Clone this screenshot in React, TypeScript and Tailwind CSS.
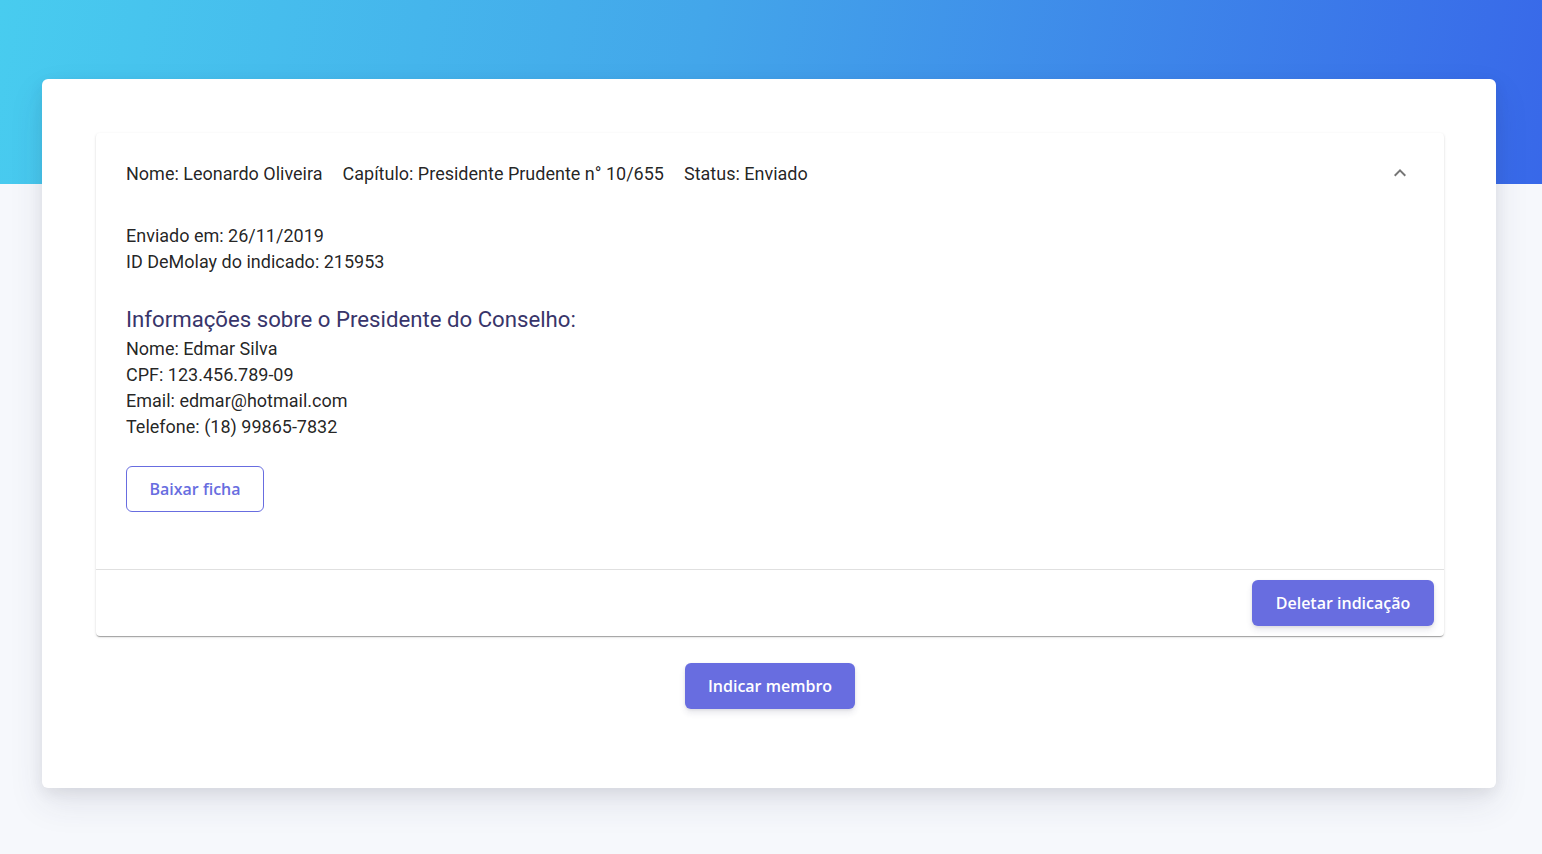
import React from "react";

const body = "font-['Roboto','Liberation_Sans',sans-serif]";
const btnFont = "font-['Open_Sans','Noto_Sans',sans-serif]";

export default function App() {
  return (
    <div className="min-h-[854px] bg-[#f6f8fc] pb-[66px]">
      <div className="h-[184px] bg-[linear-gradient(100deg,#48ccef_0%,#43a6ea_45%,#3868e9_100%)]" />
      <div className="ml-[42px] -mt-[105px] h-[709px] w-[1454px] rounded-[6px] bg-white pl-[54px] pr-[52px] pt-[54px] shadow-[0_15px_35px_rgba(50,50,93,0.1),0_5px_15px_rgba(0,0,0,0.07)]">
        <div className={`rounded-[4px] bg-white shadow-[0px_2px_1px_-1px_rgba(0,0,0,0.2),0px_1px_1px_0px_rgba(0,0,0,0.14),0px_1px_3px_0px_rgba(0,0,0,0.12)] ${body}`}>
          <div className="flex h-[80px] items-center pl-[30px] pr-[32px] text-[18px] text-[rgba(0,0,0,0.87)]">
            <div className="flex flex-1 gap-[20px]">
              <span>Nome: Leonardo Oliveira</span>
              <span>Capítulo: Presidente Prudente n° 10/655</span>
              <span>Status: Enviado</span>
            </div>
            <svg viewBox="0 0 24 24" className="h-[24px] w-[24px] rotate-180 fill-[rgba(0,0,0,0.54)]">
              <path d="M16.59 8.59L12 13.17 7.41 8.59 6 10l6 6 6-6z" />
            </svg>
          </div>
          <div className="flex flex-col items-start pl-[30px] pt-[10px] pb-[57px] text-[18px] leading-[26px] text-[rgba(0,0,0,0.87)]">
            <div>Enviado em: 26/11/2019</div>
            <div>ID DeMolay do indicado: 215953</div>
            <div className="mt-[28px] mb-[1px] text-[22.2px] leading-[32px] text-[#38356a]">Informações sobre o Presidente do Conselho:</div>
            <div>Nome: Edmar Silva</div>
            <div>CPF: 123.456.789-09</div>
            <div>Email: edmar@hotmail.com</div>
            <div>Telefone: (18) 99865-7832</div>
            <button className={`mt-[26px] h-[46px] w-[138px] rounded-[6px] border border-[#686de0] text-[16px] font-semibold text-[#686de0] ${btnFont}`}>
              Baixar ficha
            </button>
          </div>
          <div className="flex justify-end border-t border-[#e0e0e0] p-[10px]">
            <button className={`h-[46px] w-[182px] rounded-[6px] bg-[#686de0] text-[16px] font-semibold text-white shadow-[0_4px_6px_rgba(50,50,93,0.11),0_1px_3px_rgba(0,0,0,0.08)] ${btnFont}`}>
              Deletar indicação
            </button>
          </div>
        </div>
        <div className="mt-[27px] flex justify-center">
          <button className={`h-[46px] w-[170px] rounded-[6px] bg-[#686de0] text-[16px] font-semibold text-white shadow-[0_4px_6px_rgba(50,50,93,0.11),0_1px_3px_rgba(0,0,0,0.08)] ${btnFont}`}>
            Indicar membro
          </button>
        </div>
      </div>
    </div>
  );
}
